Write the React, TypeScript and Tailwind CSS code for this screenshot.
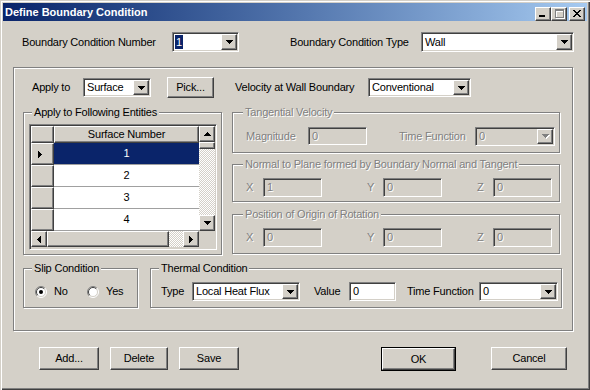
import React from 'react';

// classic win32 bevels
const sunken =
  'border border-t-[#808080] border-l-[#808080] border-r-white border-b-white shadow-[inset_1px_1px_0_#404040,inset_-1px_-1px_0_#d4d0c8]';
const raised =
  'border border-t-white border-l-white border-r-[#404040] border-b-[#404040] shadow-[inset_-1px_-1px_0_#808080,inset_1px_1px_0_#d4d0c8] bg-[#d4d0c8]';
const etched = 'border border-[#808080] shadow-[inset_1px_1px_0_#fff,1px_1px_0_#fff]';
const grayText = 'text-[#808080] [text-shadow:1px_1px_0_#fff]';
const dither = 'bg-[image:repeating-conic-gradient(#d4d0c8_0%_25%,#ffffff_0%_50%)] bg-[length:2px_2px]';

const Pixels = ({ rows, color }: { rows: string[]; color: string }) => (
  <svg width={rows[0].length} height={rows.length} shapeRendering="crispEdges">
    {rows.map((r, y) =>
      r.split('').map((c, x) => (c === 'x' ? <rect key={`${x}-${y}`} x={x} y={y} width="1" height="1" fill={color} /> : null))
    )}
  </svg>
);

const ARROWS: Record<string, string[]> = {
  down: ['xxxxxxx', '.xxxxx.', '..xxx..', '...x...'],
  up: ['...x...', '..xxx..', '.xxxxx.', 'xxxxxxx'],
  right: ['x...', 'xx..', 'xxx.', 'xxxx', 'xxx.', 'xx..', 'x...'],
  left: ['...x', '..xx', '.xxx', 'xxxx', '.xxx', '..xx', '...x'],
};

const Arrow = ({ dir, disabled }: { dir: string; disabled?: boolean }) =>
  disabled ? (
    <div className="relative">
      <div className="absolute left-[1px] top-[1px]">
        <Pixels rows={ARROWS[dir]} color="#ffffff" />
      </div>
      <div className="relative">
        <Pixels rows={ARROWS[dir]} color="#808080" />
      </div>
    </div>
  ) : (
    <Pixels rows={ARROWS[dir]} color="#000000" />
  );

const Combo = ({ value, className, disabled, selected }: { value: string; className: string; disabled?: boolean; selected?: boolean }) => (
  <div className={`${sunken} ${className} flex p-[1px] ${disabled ? 'bg-[#d4d0c8]' : 'bg-white'}`}>
    <div className="flex-1 flex items-stretch pl-[1px] overflow-hidden whitespace-nowrap">
      {selected ? (
        <span className="bg-[#0a246a] text-white px-[1px] my-[1px] flex items-center">{value}</span>
      ) : (
        <span className={`flex items-center pl-[1px] ${disabled ? grayText : ''}`}>{value}</span>
      )}
    </div>
    <div className={`${raised} w-[16px] flex items-center justify-center`}>
      <Arrow dir="down" disabled={disabled} />
    </div>
  </div>
);

const Edit = ({ value, className, disabled }: { value: string; className: string; disabled?: boolean }) => (
  <div className={`${sunken} ${className} flex items-center pl-[3px] ${disabled ? 'bg-[#d4d0c8]' : 'bg-white'}`}>
    <span className={disabled ? grayText : ''}>{value}</span>
  </div>
);

const Group = ({
  label,
  className,
  disabled,
  labelLeft = 'left-[8px]',
  children,
}: {
  label: string;
  className: string;
  disabled?: boolean;
  labelLeft?: string;
  children?: React.ReactNode;
}) => (
  <div className={`relative ${etched} ${className}`}>
    <span className={`absolute -top-[7px] ${labelLeft} px-[2px] bg-[#d4d0c8] whitespace-nowrap ${disabled ? grayText : ''}`}>{label}</span>
    {children}
  </div>
);

const Btn = ({ label, className, isDefault }: { label: string; className: string; isDefault?: boolean }) =>
  isDefault ? (
    <button type="button" className={`border border-black flex ${className}`}>
      <span className={`${raised} flex-1 flex items-center justify-center`}>{label}</span>
    </button>
  ) : (
    <button type="button" className={`${raised} flex items-center justify-center ${className}`}>
      {label}
    </button>
  );

const Radio = ({ checked }: { checked?: boolean }) => (
  <svg width="12" height="12" viewBox="0 0 12 12">
    <circle cx="6" cy="6" r="5" fill="#fff" />
    <path d="M9.9 2.1 A5.5 5.5 0 0 0 2.1 9.9" fill="none" stroke="#808080" />
    <path d="M2.1 9.9 A5.5 5.5 0 0 0 9.9 2.1" fill="none" stroke="#fff" />
    <path d="M9.2 2.8 A4.5 4.5 0 0 0 2.8 9.2" fill="none" stroke="#404040" />
    <path d="M2.8 9.2 A4.5 4.5 0 0 0 9.2 2.8" fill="none" stroke="#d4d0c8" />
    {checked && <circle cx="6" cy="6" r="2" fill="#000" />}
  </svg>
);

const ScrollBtn = ({ dir }: { dir: string }) => (
  <div className={`${raised} w-[16px] h-[16px] shrink-0 flex items-center justify-center`}>
    <Arrow dir={dir} />
  </div>
);

const Grid = () => {
  const rows = ['1', '2', '3', '4'];
  return (
    <div className={`${sunken} ml-[5px] mt-[11px] w-[188px] h-[126px] p-[1px] bg-[#d4d0c8] flex flex-col`}>
      <div className="flex h-[105px]">
        <div className="w-[168px] flex flex-col">
          <div className="flex h-[17px]">
            <div className={`${raised} w-[23px]`} />
            <div className={`${raised} flex-1 flex items-center justify-center`}>Surface Number</div>
          </div>
          {rows.map((r, i) => (
            <div key={r} className="flex h-[22px]">
              <div className={`${raised} w-[23px] flex items-center pl-[6px]`}>{i === 0 && <Arrow dir="right" />}</div>
              <div
                className={`flex-1 flex items-center justify-center border-b border-[#a0a0a0] ${
                  i === 0 ? 'bg-[#0a246a] text-white' : 'bg-white'
                }`}
              >
                {r}
              </div>
            </div>
          ))}
        </div>
        <div className="w-[16px] flex flex-col">
          <ScrollBtn dir="up" />
          <div className={`${raised} h-[7px]`} />
          <div className={`flex-1 ${dither}`} />
          <ScrollBtn dir="down" />
        </div>
      </div>
      <div className="flex h-[16px]">
        <ScrollBtn dir="left" />
        <div className={`${raised} w-[122px]`} />
        <div className={`flex-1 ${dither}`} />
        <ScrollBtn dir="right" />
        <div className="w-[16px]" />
      </div>
    </div>
  );
};

const TitleBtn = ({ children, className = '' }: { children: React.ReactNode; className?: string }) => (
  <div className={`${raised} w-[16px] h-[14px] flex items-end justify-center pb-[2px] ${className}`}>{children}</div>
);

const App = () => {
  return (
    <div className="w-[590px] h-[390px] bg-[#d4d0c8] font-['Liberation_Sans',Arial,sans-serif] text-[11px] leading-[13px] tracking-[-0.2px] text-black shadow-[inset_1px_1px_0_#d4d0c8,inset_2px_2px_0_#fff,inset_-1px_-1px_0_#404040,inset_-2px_-2px_0_#808080] flex flex-col overflow-hidden select-none">
      {/* title bar */}
      <div className="mx-[3px] mt-[3px] h-[18px] bg-linear-to-r from-[#0a246a] to-[#a6caf0] flex items-center">
        <span className="ml-[2px] text-white font-bold tracking-normal">Define Boundary Condition</span>
        <div className="ml-auto mr-[2px] mt-[3px] flex">
          <TitleBtn>
            <div className="w-[6px] h-[2px] bg-black mb-[1px] mr-[2px]" />
          </TitleBtn>
          <TitleBtn>
            <div className="relative w-[9px] h-[9px] mb-[0px]">
              <div className="absolute left-[1px] top-[1px] w-[9px] h-[9px] border border-t-2 border-white" />
              <div className="absolute inset-0 border border-t-2 border-[#808080]" />
            </div>
          </TitleBtn>
          <TitleBtn className="ml-[2px]">
            <div className="mb-[1px]">
              <Pixels rows={['xx....xx', '.xx..xx.', '..xxxx..', '...xx...', '..xxxx..', '.xx..xx.', 'xx....xx']} color="#000" />
            </div>
          </TitleBtn>
        </div>
      </div>

      {/* number / type */}
      <div className="flex items-center mt-[11px] h-[20px] pl-[22px]">
        <span className="w-[150px]">Boundary Condition Number</span>
        <Combo value="1" selected className="w-[67px] h-[20px]" />
        <span className="ml-[51px] w-[131px]">Boundary Condition Type</span>
        <Combo value="Wall" className="w-[153px] h-[20px]" />
      </div>

      {/* main panel */}
      <div className={`${etched} ml-[13px] mt-[15px] w-[560px] h-[264px] flex flex-col`}>
        <div className="flex items-center mt-[9px] h-[21px] pl-[18px]">
          <span className="w-[51px]">Apply to</span>
          <Combo value="Surface" className="w-[68px] h-[19px]" />
          <Btn label="Pick..." className="ml-[16px] w-[47px] h-[21px]" />
          <span className="ml-[21px] w-[133px]">Velocity at Wall Boundary</span>
          <Combo value="Conventional" className="w-[103px] h-[19px]" />
        </div>

        <div className="flex items-start mt-[14px]">
          <Group label="Apply to Following Entities" className="ml-[9px] w-[199px] h-[143px]">
            <Grid />
          </Group>

          <div className="ml-[10px] w-[328px] flex flex-col">
            <Group label="Tangential Velocity" disabled labelLeft="left-[10px]" className="h-[41px]">
              <div className="flex items-center mt-[14px] pl-[13px] h-[18px]">
                <span className={`w-[62px] ${grayText}`}>Magnitude</span>
                <Edit value="0" disabled className="w-[59px] h-[18px]" />
                <span className={`ml-[32px] w-[76px] ${grayText}`}>Time Function</span>
                <Combo value="0" disabled className="w-[80px] h-[19px]" />
              </div>
            </Group>

            <Group
              label="Normal to Plane formed by Boundary Normal and Tangent"
              disabled
              labelLeft="left-[10px]"
              className="mt-[11px] h-[38px]"
            >
              <div className="flex items-center mt-[13px] pl-[13px] h-[19px]">
                <span className={`w-[17px] ${grayText}`}>X</span>
                <Edit value="1" disabled className="w-[59px] h-[19px]" />
                <span className={`ml-[45px] w-[16px] ${grayText}`}>Y</span>
                <Edit value="0" disabled className="w-[59px] h-[19px]" />
                <span className={`ml-[35px] w-[16px] ${grayText}`}>Z</span>
                <Edit value="0" disabled className="w-[59px] h-[19px]" />
              </div>
            </Group>

            <Group label="Position of Origin of Rotation" disabled labelLeft="left-[10px]" className="mt-[12px] h-[40px]">
              <div className="flex items-center mt-[13px] pl-[13px] h-[19px]">
                <span className={`w-[17px] ${grayText}`}>X</span>
                <Edit value="0" disabled className="w-[59px] h-[19px]" />
                <span className={`ml-[45px] w-[16px] ${grayText}`}>Y</span>
                <Edit value="0" disabled className="w-[59px] h-[19px]" />
                <span className={`ml-[35px] w-[16px] ${grayText}`}>Z</span>
                <Edit value="0" disabled className="w-[59px] h-[19px]" />
              </div>
            </Group>
          </div>
        </div>

        <div className="flex mt-[13px]">
          <Group label="Slip Condition" className="ml-[9px] w-[115px] h-[40px]">
            <div className="flex items-center mt-[13px] h-[19px] pl-[11px]">
              <Radio checked />
              <span className="ml-[7px] w-[33px]">No</span>
              <Radio />
              <span className="ml-[7px]">Yes</span>
            </div>
          </Group>

          <Group label="Thermal Condition" className="ml-[12px] w-[412px] h-[40px]">
            <div className="flex items-center mt-[13px] h-[19px] pl-[10px]">
              <span className="w-[31px]">Type</span>
              <Combo value="Local Heat Flux" className="w-[108px] h-[19px]" />
              <span className="ml-[14px] w-[35px]">Value</span>
              <Edit value="0" className="w-[47px] h-[19px]" />
              <span className="ml-[11px] w-[72px]">Time Function</span>
              <Combo value="0" className="w-[79px] h-[19px]" />
            </div>
          </Group>
        </div>
      </div>

      {/* buttons */}
      <div className="flex items-start mt-[16px] pl-[39px]">
        <Btn label="Add..." className="w-[60px] h-[23px]" />
        <Btn label="Delete" className="ml-[11px] w-[58px] h-[23px]" />
        <Btn label="Save" className="ml-[11px] w-[60px] h-[23px]" />
        <Btn label="OK" isDefault className="ml-[142px] w-[75px] h-[24px]" />
        <Btn label="Cancel" className="ml-[35px] w-[76px] h-[23px]" />
      </div>
    </div>
  );
};

export default App;
